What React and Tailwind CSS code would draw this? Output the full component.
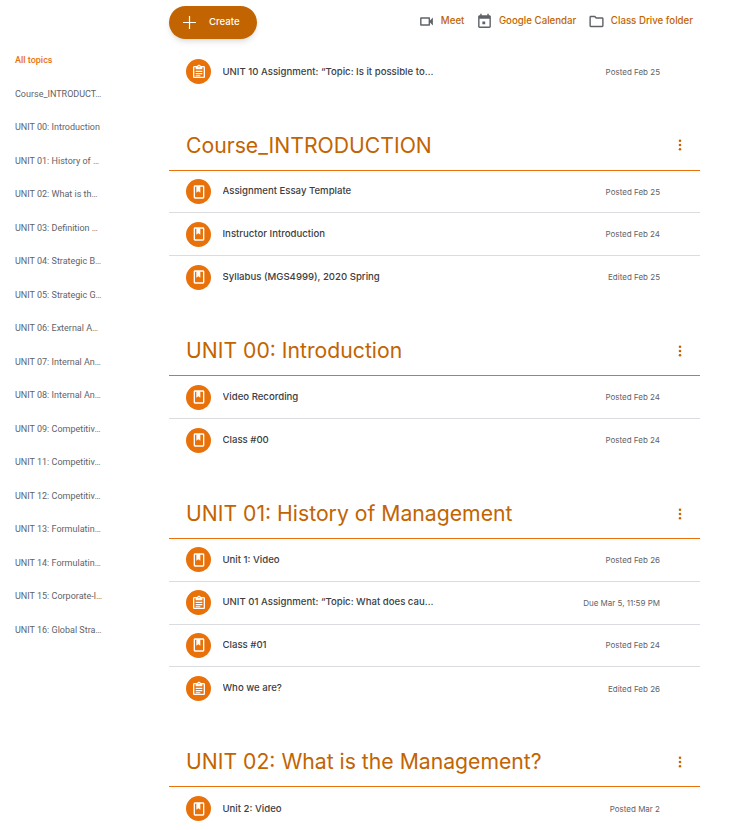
import React from "react";

const topics = [
  "Course_INTRODUCT…",
  "UNIT 00: Introduction",
  "UNIT 01: History of …",
  "UNIT 02: What is th…",
  "UNIT 03: Definition …",
  "UNIT 04: Strategic B…",
  "UNIT 05: Strategic G…",
  "UNIT 06: External A…",
  "UNIT 07: Internal An…",
  "UNIT 08: Internal An…",
  "UNIT 09: Competitiv…",
  "UNIT 11: Competitiv…",
  "UNIT 12: Competitiv…",
  "UNIT 13: Formulatin…",
  "UNIT 14: Formulatin…",
  "UNIT 15: Corporate-l…",
  "UNIT 16: Global Stra…",
];

const sections = [
  {
    title: "Course_INTRODUCTION",
    items: [
      { icon: "book", title: "Assignment Essay Template", date: "Posted Feb 25" },
      { icon: "book", title: "Instructor Introduction", date: "Posted Feb 24" },
      { icon: "book", title: "Syllabus (MGS4999), 2020 Spring", date: "Edited Feb 25" },
    ],
  },
  {
    title: "UNIT 00: Introduction",
    items: [
      { icon: "book", title: "Video Recording", date: "Posted Feb 24" },
      { icon: "book", title: "Class #00", date: "Posted Feb 24" },
    ],
  },
  {
    title: "UNIT 01: History of Management",
    items: [
      { icon: "book", title: "Unit 1: Video", date: "Posted Feb 26" },
      { icon: "task", title: "UNIT 01 Assignment: “Topic: What does cau…", date: "Due Mar 5, 11:59 PM" },
      { icon: "book", title: "Class #01", date: "Posted Feb 24" },
      { icon: "task", title: "Who we are?", date: "Edited Feb 26" },
    ],
  },
  {
    title: "UNIT 02: What is the Management?",
    items: [{ icon: "book", title: "Unit 2: Video", date: "Posted Mar 2" }],
  },
];

const Glyph = ({ d, className }) => (
  <svg viewBox="0 0 24 24" className={className} fill="currentColor">
    <path d={d} fillRule="evenodd" />
  </svg>
);

const ICONS = {
  book: "M18 2H6c-1.100 0-2 .9-2 2v16c0 1.100.9 2 2 2h12c1.100 0 2-.9 2-2V4c0-1.100-.9-2-2-2zM6 4h2v9l3-2 3 2V4h4v16H6V4z",
  task: "M19 3h-4.180C14.400 1.840 13.300 1 12 1c-1.300 0-2.400.84-2.820 2H5c-1.100 0-2 .9-2 2v14c0 1.100.9 2 2 2h14c1.100 0 2-.9 2-2V5c0-1.100-.9-2-2-2zm-7 0c.55 0 1 .45 1 1s-.45 1-1 1-1-.45-1-1 .45-1 1-1zm7 16H5V5h2v3h10V5h2v14zM7 10h10v2H7zm0 3.500h10v2H7zm0 3.500h7v1.500H7z",
};

const Row = ({ icon, title, date, divider }) => (
  <div className={`flex h-[42.7px] items-center pl-[17px] pr-[40px] ${divider ? "border-b border-[#dadce0]" : ""}`}>
    <div className="flex h-[25px] w-[25px] shrink-0 items-center justify-center rounded-full bg-[#e8710a] text-white">
      <Glyph d={ICONS[icon]} className="h-[16px] w-[16px]" />
    </div>
    <div className="ml-[11.5px] flex-1 truncate text-[9.6px] font-medium text-[#3c4043]">{title}</div>
    <div className="text-[8px] text-[#5f6368]">{date}</div>
  </div>
);

const Section = ({ title, items }) => (
  <section className="mt-[27.5px]">
    <div className="flex h-[50px] items-center justify-between border-b border-[#e8710a] pl-[17px] pr-[18px]">
      <h2 className="pt-[1px] text-[21.2px] text-[#c26401]">{title}</h2>
      <svg viewBox="0 0 4 14" className="h-[12px] w-[4px] fill-[#c26401]">
        <circle cx="2" cy="2" r="1.5" />
        <circle cx="2" cy="7" r="1.5" />
        <circle cx="2" cy="12" r="1.5" />
      </svg>
    </div>
    {items.map((item, i) => (
      <Row key={item.title} {...item} divider={i < items.length - 1} />
    ))}
  </section>
);

const TopLink = ({ d, label }) => (
  <div className="flex items-center">
    <Glyph d={d} className="h-[17px] w-[17px] text-[#5f6368]" />
    <span className="ml-[5.5px] text-[9.7px] font-medium text-[#c26401]">{label}</span>
  </div>
);

export default function App() {
  return (
    <div className="flex h-[830px] w-[745px] overflow-hidden bg-white font-['Inter',sans-serif]">
      {/* Topic list */}
      <nav className="w-[169px] shrink-0 pl-[15px] pt-[44px] font-['Roboto',sans-serif] text-[9px] text-[#5f6368]">
        <div className="flex h-[33.5px] items-center font-medium text-[#e8710a]">All topics</div>
        {topics.map((topic) => (
          <div key={topic} className="flex h-[33.5px] items-center">
            {topic}
          </div>
        ))}
      </nav>

      {/* Classwork */}
      <main className="w-[531px] shrink-0">
        <div className="flex items-center justify-between pr-[7px] pt-[6px]">
          <button className="flex h-[33px] w-[88px] items-center rounded-full bg-[#c26401] pl-[14px] text-[9.6px] font-medium text-white shadow-md">
            <svg viewBox="0 0 13 13" className="h-[13px] w-[13px] stroke-white">
              <path d="M6.5 0v13M0 6.5h13" strokeWidth="1.2" fill="none" />
            </svg>
            <span className="ml-[13px]">Create</span>
          </button>
          <div className="flex items-center gap-[12px] pb-[3px]">
            <TopLink d="M15 8v8H5V8h10m1-2H4c-.55 0-1 .45-1 1v10c0 .55.45 1 1 1h12c.55 0 1-.45 1-1v-3.500l4 4v-11l-4 4V7c0-.55-.45-1-1-1z" label="Meet" />
            <TopLink d="M13 12H9v4h4v-4zM16 1v2H8V1H6v2H5c-1.110 0-1.990.9-1.990 2L3 19c0 1.100.89 2 2 2h14c1.100 0 2-.9 2-2V5c0-1.100-.9-2-2-2h-1V1h-2zm3 18H5V8h14v11z" label="Google Calendar" />
            <TopLink d="M20 6h-8l-2-2H4c-1.100 0-1.990.9-1.990 2L2 18c0 1.100.9 2 2 2h16c1.100 0 2-.9 2-2V8c0-1.100-.9-2-2-2zm0 12H4V6h5.170l2 2H20v10z" label="Class Drive folder" />
          </div>
        </div>
        <div className="mt-[11.5px]">
          <Row icon="task" title="UNIT 10 Assignment: “Topic: Is it possible to…" date="Posted Feb 25" />
        </div>
        {sections.map((section) => (
          <Section key={section.title} {...section} />
        ))}
      </main>
    </div>
  );
}
